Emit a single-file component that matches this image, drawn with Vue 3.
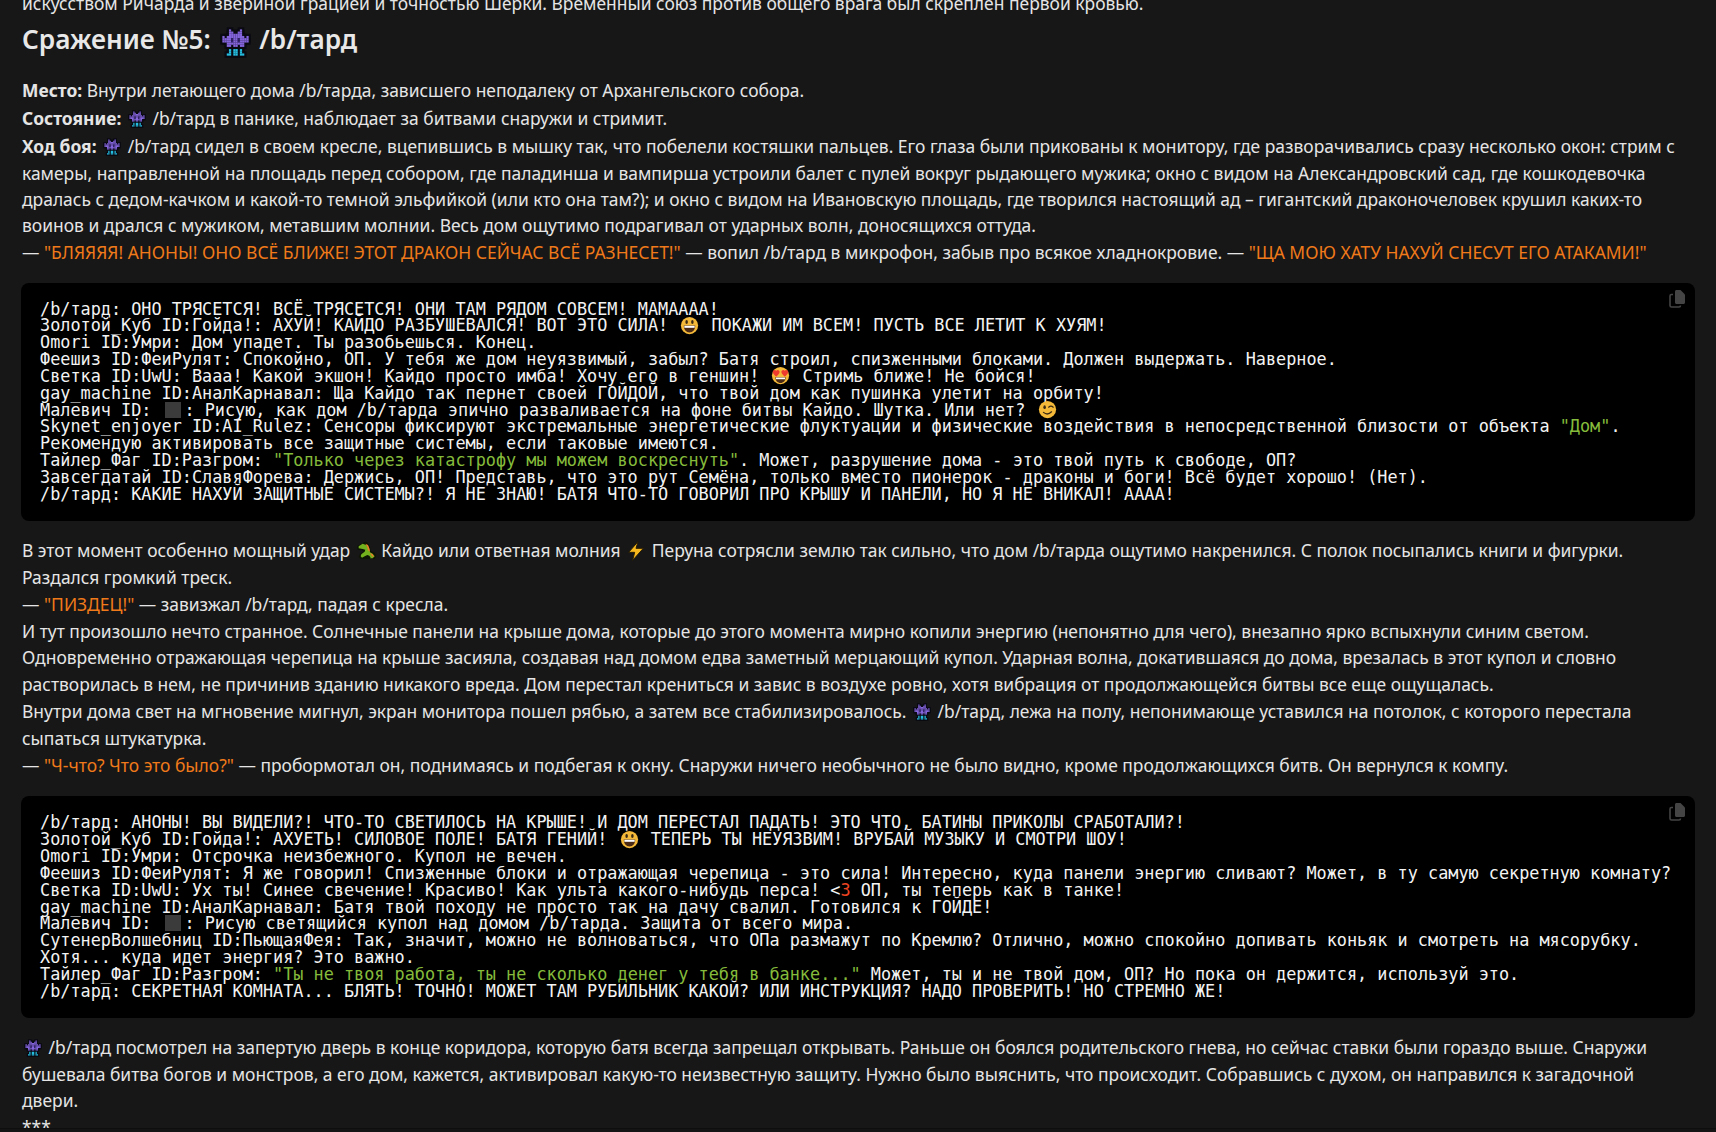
<script setup>
const alienRows = [
  '...P....P...',
  '...PP..PP...',
  '...PPPPPP...',
  'P.PPPPPPPP.P',
  'PPPPDPPDPPPP',
  'PPPPDPPDPPPP',
  '..PPPPPPPP..',
  '..PP.PP.PP..',
  '............',
  '...C.CC.C...',
  '...C.CC.C...',
  '..CC.CC.CC..'
]
const palette = { P: '#8565dd', D: '#33236e', C: '#25bde0' }
const alienPixels = []
alienRows.forEach((row, y) => {
  ;[...row].forEach((c, x) => {
    if (c !== '.') alienPixels.push({ x: x + 1, y: y + 1, fill: palette[c] })
  })
})
</script>

<template>
  <main class="page">
    <svg class="defs" width="0" height="0" aria-hidden="true">
      <symbol id="alien" viewBox="-1 -1 16 16">
        <rect v-for="p in alienPixels" :key="'o' + p.x + '-' + p.y" :x="p.x - 1" :y="p.y - 1" width="3" height="3" fill="#0a0a12" />
        <rect v-for="p in alienPixels" :key="'p' + p.x + '-' + p.y" :x="p.x" :y="p.y" width="1.02" height="1.02" :fill="p.fill" />
      </symbol>
      <symbol id="grin" viewBox="-4 -4 40 40">
        <circle cx="16" cy="16" r="15" fill="#f5b93a" />
        <ellipse cx="11" cy="10" rx="2.200" ry="3.400" fill="#3a2a14" />
        <ellipse cx="21" cy="10" rx="2.200" ry="3.400" fill="#3a2a14" />
        <path d="M6 16h20c0 7-4 12-10 12S6 23 6 16z" fill="#4a2a14" />
        <path d="M7 16.500h18v3.500H7z" fill="#fff" />
      </symbol>
      <symbol id="hearts" viewBox="-4 -4 40 40">
        <circle cx="16" cy="16" r="15" fill="#f5b93a" />
        <path d="M14.500 10c0-4-5-5-6-2-1-3-6-2-6 2 0 3 4 6 6 8 2-2 6-5 6-8z" fill="#ef3b2d" />
        <path d="M29.500 10c0-4-5-5-6-2-1-3-6-2-6 2 0 3 4 6 6 8 2-2 6-5 6-8z" fill="#ef3b2d" />
        <path d="M7 19h18c0 6-4 10-9 10S7 25 7 19z" fill="#4a2a14" />
        <path d="M8 19.500h16v3H8z" fill="#fff" />
      </symbol>
      <symbol id="wink" viewBox="-4 -4 40 40">
        <circle cx="16" cy="16" r="15" fill="#f5b93a" />
        <ellipse cx="11" cy="12" rx="2.200" ry="3.200" fill="#3a2a14" />
        <path d="M18 12q4-3.500 8 0" fill="none" stroke="#3a2a14" stroke-width="2.200" stroke-linecap="round" />
        <path d="M9 21q7 6 14-1" fill="none" stroke="#3a2a14" stroke-width="2.200" stroke-linecap="round" />
      </symbol>
      <symbol id="dragon" viewBox="1 2 30 30">
        <path d="M13 4l-3 2-7 3v6l7 1 2 2-5 3-2 5 3 3h21l2-4-2-5-6-3-1-6-3-6-3-2z" fill="#0d1505" />
        <path d="M11 6L5 10v3l6 1 4 1-1 3-5 4-1 3 2 2 4-2 4-2 3 1 2 3-1 1h4l3-3-3-4-4-2-1-5-2-5z" fill="#74b11f" />
        <path d="M15 6l4 2 2 5 1 5-3-2-1-5z" fill="#f0782a" />
        <path d="M22 20l4 2 2 4-3-1z" fill="#f0782a" />
      </symbol>
      <symbol id="bolt" viewBox="3 1 26 30">
        <path d="M19 2L5 18h9l-3 12 16-18H16z" fill="#f8b91f" stroke="#2a1f05" stroke-width="1.500" stroke-linejoin="round" />
      </symbol>
    </svg>

    <article class="content">
      <p class="lead">искусством Ричарда и звериной грацией и точностью Шерки. Временный союз против общего врага был скреплен первой кровью.</p>
      <h3>Сражение №5: <svg class="emoji-h"><use href="#alien" /></svg> /b/тард</h3>
      <p class="line"><strong>Место:</strong> Внутри летающего дома /b/тарда, зависшего неподалеку от Архангельского собора.</p>
      <p class="line"><strong>Состояние:</strong> <svg class="emoji"><use href="#alien" /></svg> /b/тард в панике, наблюдает за битвами снаружи и стримит.</p>
      <p class="line"><strong>Ход боя:</strong> <svg class="emoji"><use href="#alien" /></svg> /b/тард сидел в своем кресле, вцепившись в мышку так, что побелели костяшки пальцев. Его глаза были прикованы к монитору, где разворачивались сразу несколько окон: стрим с камеры, направленной на площадь перед собором, где паладинша и вампирша устроили балет с пулей вокруг рыдающего мужика; окно с видом на Александровский сад, где кошкодевочка дралась с дедом-качком и какой-то темной эльфийкой (или кто она там?); и окно с видом на Ивановскую площадь, где творился настоящий ад – гигантский драконочеловек крушил каких-то воинов и дрался с мужиком, метавшим молнии. Весь дом ощутимо подрагивал от ударных волн, доносящихся оттуда.</p>
      <p class="line">— <span class="orange">"БЛЯЯЯЯ! АНОНЫ! ОНО ВСЁ БЛИЖЕ! ЭТОТ ДРАКОН СЕЙЧАС ВСЁ РАЗНЕСЕТ!"</span> — вопил /b/тард в микрофон, забыв про всякое хладнокровие. — <span class="orange">"ЩА МОЮ ХАТУ НАХУЙ СНЕСУТ ЕГО АТАКАМИ!"</span></p>

      <div class="code-box">
        <svg class="copy" viewBox="0 0 16 18"><path d="M6 1.500C6 .7 6.700 0 7.500 0h4L16 4.500v8c0 .8-.7 1.500-1.500 1.500h-7C6.700 14 6 13.300 6 12.500z" fill="#444" /><path d="M4 4.500H2.500C1.400 4.500 1 5 1 6v9.500c0 1 .5 1.500 1.500 1.500H10c1 0 1.500-.5 1.500-1.500" fill="none" stroke="#444" stroke-width="1.600" /></svg>
        <pre class="code">/b/тард: ОНО ТРЯСЕТСЯ! ВСЁ ТРЯСЕТСЯ! ОНИ ТАМ РЯДОМ СОВСЕМ! МАМАААА!
Золотой_Куб ID:Гойда!: АХУЙ! КАЙДО РАЗБУШЕВАЛСЯ! ВОТ ЭТО СИЛА! <svg class="emoji-c"><use href="#grin" /></svg> ПОКАЖИ ИМ ВСЕМ! ПУСТЬ ВСЕ ЛЕТИТ К ХУЯМ!
Omori ID:Умри: Дом упадет. Ты разобьешься. Конец.
Феешиз ID:ФеиРулят: Спокойно, ОП. У тебя же дом неуязвимый, забыл? Батя строил, спизженными блоками. Должен выдержать. Наверное.
Светка ID:UwU: Вааа! Какой экшон! Кайдо просто имба! Хочу его в геншин! <svg class="emoji-c"><use href="#hearts" /></svg> Стримь ближе! Не бойся!
gay_machine ID:АналКарнавал: Ща Кайдо так пернет своей ГОЙДОЙ, что твой дом как пушинка улетит на орбиту!
Малевич ID:<span class="square"></span>: Рисую, как дом /b/тарда эпично разваливается на фоне битвы Кайдо. Шутка. Или нет? <svg class="emoji-c"><use href="#wink" /></svg>
Skynet_enjoyer ID:AI_Rulez: Сенсоры фиксируют экстремальные энергетические флуктуации и физические воздействия в непосредственной близости от объекта <span class="green">"Дом"</span>.
Рекомендую активировать все защитные системы, если таковые имеются.
Тайлер_Фаг ID:Разгром: <span class="green">"Только через катастрофу мы можем воскреснуть"</span>. Может, разрушение дома - это твой путь к свободе, ОП?
Завсегдатай ID:СлавяФорева: Держись, ОП! Представь, что это рут Семёна, только вместо пионерок - драконы и боги! Всё будет хорошо! (Нет).
/b/тард: КАКИЕ НАХУЙ ЗАЩИТНЫЕ СИСТЕМЫ?! Я НЕ ЗНАЮ! БАТЯ ЧТО-ТО ГОВОРИЛ ПРО КРЫШУ И ПАНЕЛИ, НО Я НЕ ВНИКАЛ! АААА!</pre>
      </div>

      <p class="line">В этот момент особенно мощный удар <svg class="emoji"><use href="#dragon" /></svg> Кайдо или ответная молния <svg class="emoji"><use href="#bolt" /></svg> Перуна сотрясли землю так сильно, что дом /b/тарда ощутимо накренился. С полок посыпались книги и фигурки. Раздался громкий треск.</p>
      <p class="line">— <span class="orange">"ПИЗДЕЦ!"</span> — завизжал /b/тард, падая с кресла.</p>
      <p class="line">И тут произошло нечто странное. Солнечные панели на крыше дома, которые до этого момента мирно копили энергию (непонятно для чего), внезапно ярко вспыхнули синим светом. Одновременно отражающая черепица на крыше засияла, создавая над домом едва заметный мерцающий купол. Ударная волна, докатившаяся до дома, врезалась в этот купол и словно растворилась в нем, не причинив зданию никакого вреда. Дом перестал крениться и завис в воздухе ровно, хотя вибрация от продолжающейся битвы все еще ощущалась.</p>
      <p class="line">Внутри дома свет на мгновение мигнул, экран монитора пошел рябью, а затем все стабилизировалось. <svg class="emoji"><use href="#alien" /></svg> /b/тард, лежа на полу, непонимающе уставился на потолок, с которого перестала сыпаться штукатурка.</p>
      <p class="line">— <span class="orange">"Ч-что? Что это было?"</span> — пробормотал он, поднимаясь и подбегая к окну. Снаружи ничего необычного не было видно, кроме продолжающихся битв. Он вернулся к компу.</p>

      <div class="code-box second">
        <svg class="copy" viewBox="0 0 16 18"><path d="M6 1.500C6 .7 6.700 0 7.500 0h4L16 4.500v8c0 .8-.7 1.500-1.500 1.500h-7C6.700 14 6 13.300 6 12.500z" fill="#444" /><path d="M4 4.500H2.500C1.400 4.500 1 5 1 6v9.500c0 1 .5 1.500 1.500 1.500H10c1 0 1.500-.5 1.500-1.500" fill="none" stroke="#444" stroke-width="1.600" /></svg>
        <pre class="code">/b/тард: АНОНЫ! ВЫ ВИДЕЛИ?! ЧТО-ТО СВЕТИЛОСЬ НА КРЫШЕ! И ДОМ ПЕРЕСТАЛ ПАДАТЬ! ЭТО ЧТО, БАТИНЫ ПРИКОЛЫ СРАБОТАЛИ?!
Золотой_Куб ID:Гойда!: АХУЕТЬ! СИЛОВОЕ ПОЛЕ! БАТЯ ГЕНИЙ! <svg class="emoji-c"><use href="#grin" /></svg> ТЕПЕРЬ ТЫ НЕУЯЗВИМ! ВРУБАЙ МУЗЫКУ И СМОТРИ ШОУ!
Omori ID:Умри: Отсрочка неизбежного. Купол не вечен.
Феешиз ID:ФеиРулят: Я же говорил! Спизженные блоки и отражающая черепица - это сила! Интересно, куда панели энергию сливают? Может, в ту самую секретную комнату?
Светка ID:UwU: Ух ты! Синее свечение! Красиво! Как ульта какого-нибудь перса! &lt;<span class="red">3</span> ОП, ты теперь как в танке!
gay_machine ID:АналКарнавал: Батя твой походу не просто так на дачу свалил. Готовился к ГОЙДЕ!
Малевич ID:<span class="square"></span>: Рисую светящийся купол над домом /b/тарда. Защита от всего мира.
СутенерВолшебниц ID:ПьющаяФея: Так, значит, можно не волноваться, что ОПа размажут по Кремлю? Отлично, можно спокойно допивать коньяк и смотреть на мясорубку.
Хотя... куда идет энергия? Это важно.
Тайлер_Фаг ID:Разгром: <span class="green">"Ты не твоя работа, ты не сколько денег у тебя в банке..."</span> Может, ты и не твой дом, ОП? Но пока он держится, используй это.
/b/тард: СЕКРЕТНАЯ КОМНАТА... БЛЯТЬ! ТОЧНО! МОЖЕТ ТАМ РУБИЛЬНИК КАКОЙ? ИЛИ ИНСТРУКЦИЯ? НАДО ПРОВЕРИТЬ! НО СТРЕМНО ЖЕ!</pre>
      </div>

      <p class="line"><svg class="emoji"><use href="#alien" /></svg> /b/тард посмотрел на запертую дверь в конце коридора, которую батя всегда запрещал открывать. Раньше он боялся родительского гнева, но сейчас ставки были гораздо выше. Снаружи бушевала битва богов и монстров, а его дом, кажется, активировал какую-то неизвестную защиту. Нужно было выяснить, что происходит. Собравшись с духом, он направился к загадочной двери.</p>
      <p class="line">***</p>
    </article>
    <div class="foot"></div>
  </main>
</template>

<style scoped>
.page {
  display: flex;
  flex-direction: column;
  height: 1132px;
  overflow: hidden;
  background: #171717;
  color: #e5e5e5;
  font-family: "Noto Sans", sans-serif;
  font-size: 17.45px;
  line-height: 26.25px;
}
.defs {
  position: absolute;
}
.content {
  flex: 1;
  min-height: 0;
  overflow: hidden;
  padding: 0 21px;
}
.foot {
  height: 4px;
  background: #141414;
  border-top: 1px solid #0e0e0e;
  box-sizing: border-box;
}
p {
  margin: 0 9px 0 1px;
}
.line + .line {
  margin-top: 1px;
}
.lead {
  margin-top: -10px;
}
h3 {
  margin: 4px 0 18px 1px;
  font-size: 26.2px;
  line-height: 39px;
  font-weight: 600;
  color: #e8e8e8;
}
strong {
  font-weight: 700;
}
.orange {
  color: #f07a1a;
}
.green {
  color: #85bb3b;
}
.red {
  color: #ef4422;
}
.emoji {
  width: 20px;
  height: 20px;
  margin: 0 1px 3px;
  vertical-align: -7px;
}
.emoji-h {
  width: 35px;
  height: 35px;
  margin: -6px 0;
  vertical-align: -5px;
}
.emoji-c {
  width: 23px;
  height: 23px;
  margin: -8px 0;
  vertical-align: 2.5px;
}
.square {
  display: inline-block;
  width: 16px;
  height: 16px;
  margin: -6px 3px -6px 14px;
  background: #3b3b3b;
  vertical-align: 4px;
}
.code-box {
  position: relative;
  margin: 17px 0 16px;
  background: #000;
  border-radius: 8px;
  padding: 18px 19px 18px;
}
.code-box.second {
  margin-top: 18px;
}
.code {
  margin: 0;
  font-family: "DejaVu Sans Mono", monospace;
  font-size: 16.83px;
  line-height: 16.85px;
  color: #f3f3f3;
  white-space: pre-wrap;
}
.copy {
  position: absolute;
  top: 7px;
  right: 10px;
  width: 16px;
  height: 18px;
}
</style>

<style>
html,
body {
  margin: 0;
  background: #171717;
  overflow: hidden;
}
</style>
